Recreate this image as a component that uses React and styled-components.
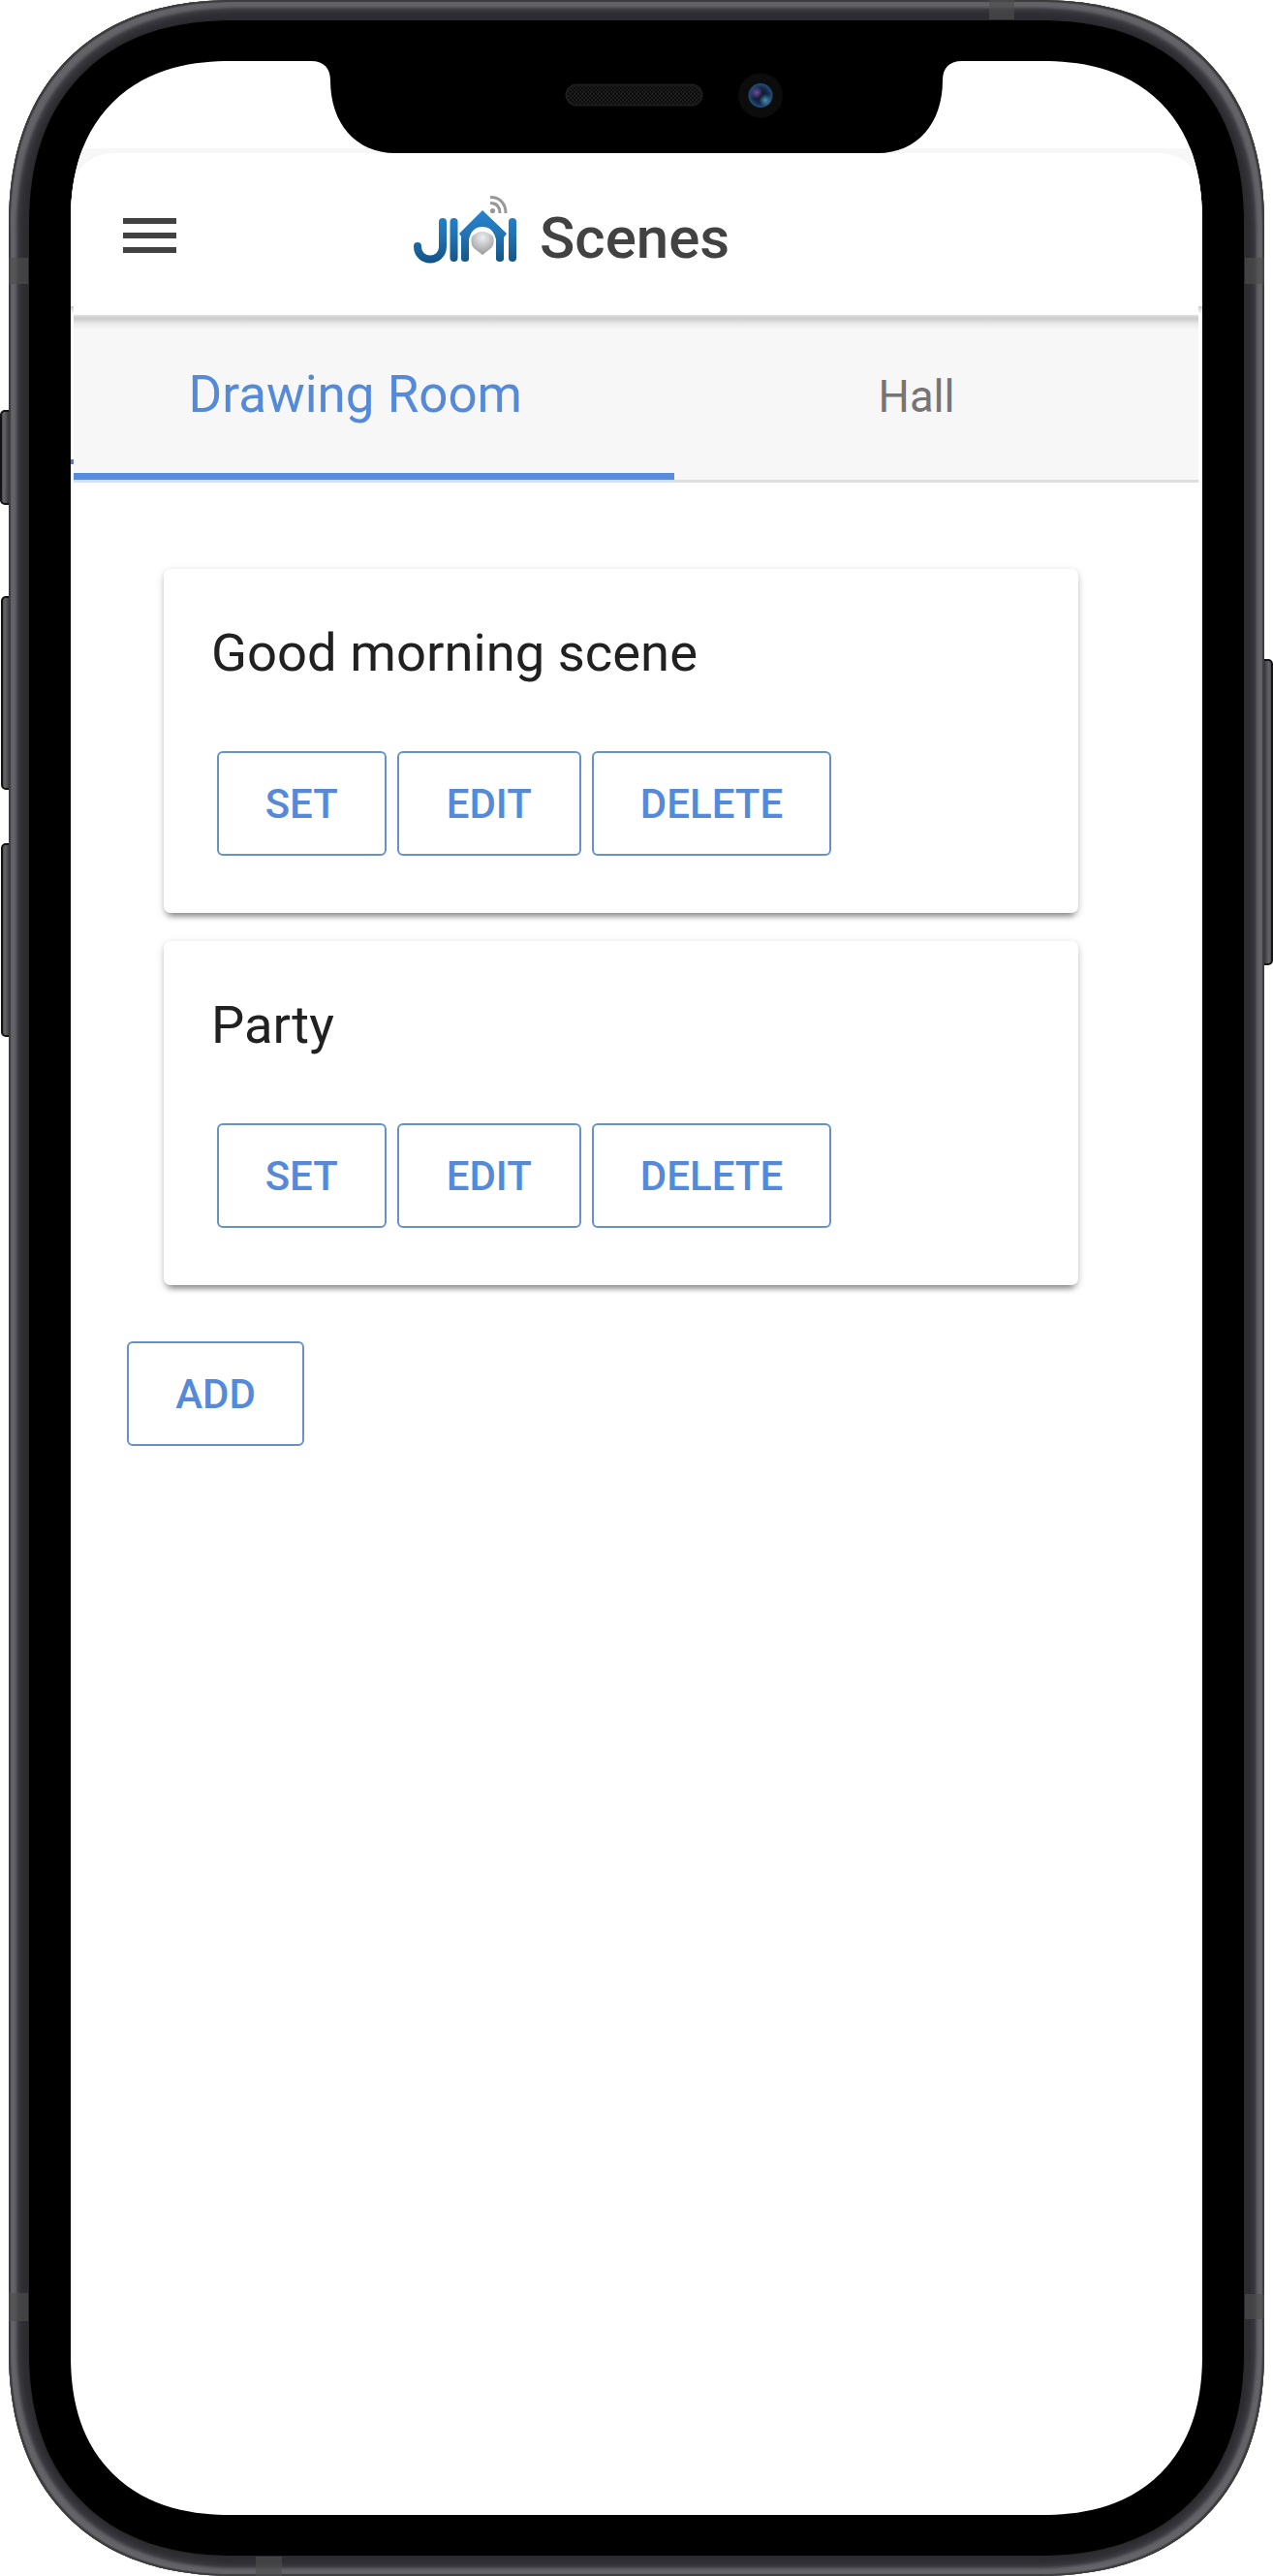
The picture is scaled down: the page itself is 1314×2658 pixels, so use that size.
import React from "react";
import styled, { createGlobalStyle } from "styled-components";

const GlobalStyle = createGlobalStyle`
  * { box-sizing: border-box; }
  html, body { margin: 0; background: #fff; }
  body { font-family: Roboto, "Liberation Sans", sans-serif; }
  button { font: inherit; cursor: pointer; }
`;

const Phone = styled.div`
  position: relative;
  width: 1314px;
  height: 2658px;
  padding: 0 9px;
  overflow: hidden;
  background: #fff;
`;

const SideKey = styled.span`
  position: absolute;
  top: ${(p) => p.$top}px;
  height: ${(p) => p.$height}px;
  width: 18px;
  ${(p) => (p.$right ? "left: 1296px;" : `left: ${p.$left}px;`)}
  border: 2px solid #141416;
  border-radius: 5px;
  background: linear-gradient(${(p) => (p.$right ? "270deg" : "90deg")}, #4a4a4e 0, #66666b 2px, #38383c 7px);
`;

const Frame = styled.div`
  position: relative;
  height: 2658px;
  width: 1296px;
  padding: 21px;
  border-radius: 208px;
  background: #2c2c31;
  box-shadow: inset 0 0 1px 2px #3c3c3f, inset 0 0 3px 8px #636368, inset 0 0 6px 11px #414147;

  @supports (corner-shape: superellipse(1.2)) {
    border-radius: 234px;
    corner-shape: superellipse(1.2);
  }
`;

const Band = styled.span`
  position: absolute;
  left: ${(p) => p.$x}px;
  top: ${(p) => p.$y}px;
  width: ${(p) => p.$w}px;
  height: ${(p) => p.$h}px;
  background: rgba(78, 78, 80, 0.65);
`;

const Bezel = styled.div`
  position: relative;
  height: 2616px;
  padding: 42px 43px;
  border-radius: 188px;
  background: #000;
  box-shadow: 0 0 0 1px #29292b;

  @supports (corner-shape: superellipse(1.2)) {
    border-radius: 212px;
    corner-shape: superellipse(1.2);
  }
`;

const Screen = styled.div`
  position: relative;
  display: flex;
  flex-direction: column;
  height: 2532px;
  overflow: hidden;
  border-radius: 146px;
  background: #fff;

  @supports (corner-shape: superellipse(1.2)) {
    border-radius: 165px;
    corner-shape: superellipse(1.2);
  }
`;

const Notch = styled.svg`
  position: absolute;
  left: 240px;
  top: 0;
  z-index: 3;
`;

const EdgeMark = styled.span`
  position: absolute;
  left: ${(p) => (p.$right ? 1164 : 0)}px;
  top: ${(p) => p.$top}px;
  width: ${(p) => (p.$right ? 4 : 3)}px;
  height: ${(p) => p.$height}px;
  background: ${(p) => p.$fill};
`;

const StatusBar = styled.div`
  flex: none;
  height: 90px;
`;

const HeaderBacking = styled.div`
  flex: none;
  padding-top: 5px;
  background: linear-gradient(#f7f7f7 60px, #fff 60px);
`;

const Header = styled.header`
  display: flex;
  align-items: center;
  height: 167px;
  padding: 3px 0 0 54px;
  border-radius: 44px 44px 0 0;
  background: #fff;
`;

const MenuButton = styled.button`
  display: flex;
  flex-direction: column;
  gap: 9px;
  width: 55px;
  padding: 0;
  border: 0;
  background: none;
`;

const MenuLine = styled.span`
  display: block;
  height: 6px;
  background: #424242;
`;

const Brand = styled.div`
  display: flex;
  align-items: flex-start;
  height: 76px;
  margin-left: 242px;
`;

const Title = styled.h1`
  margin: 6px 0 0 21px;
  font-size: 60px;
  line-height: 70px;
  font-weight: 500;
  color: #424242;
`;

const Tabs = styled.nav`
  position: relative;
  display: flex;
  flex: none;
  height: 173px;
  margin: 0 4px 0 3px;
  border-bottom: 3px solid #dedede;
  background: linear-gradient(#e2e2e2 0, #cdcdcd 3px, #d2d2d2 5px, #e9e9e9 9px, #f7f7f7 15px);
`;

const Tab = styled.button`
  position: relative;
  width: ${(p) => p.$w}px;
  padding: ${(p) => (p.$active ? "0 38px 8px 0" : "0 40px 2px 0")};
  border: 0;
  background: none;
  font-size: ${(p) => (p.$active ? 54 : 46)}px;
  color: ${(p) => (p.$active ? "#548ad8" : "#757575")};
  white-space: nowrap;

  &::after {
    content: "";
    display: ${(p) => (p.$active ? "block" : "none")};
    position: absolute;
    left: 0;
    right: 0;
    bottom: -3px;
    height: 10px;
    background: linear-gradient(#588bdb 7px, #d3e1f1 7px);
  }
`;

const TabText = styled.span`
  display: inline-block;
  transform: scaleX(${(p) => p.$stretch});
`;

const Content = styled.main`
  display: flex;
  flex-direction: column;
  gap: 29px;
  padding: 89px 128px 0 96px;
`;

const Card = styled.article`
  display: flex;
  flex-direction: column;
  height: 355px;
  padding: 55px 50px 0 49px;
  border-radius: 7px;
  background: #fff;
  box-shadow: 0 8px 6px -5px rgba(0, 0, 0, 0.33), 0 3px 6px rgba(0, 0, 0, 0.18), 0 2px 12px rgba(0, 0, 0, 0.08);
`;

const CardTitle = styled.h2`
  margin: 0;
  font-size: 54.4px;
  line-height: 64px;
  font-weight: 400;
  color: #212121;
`;

const Actions = styled.div`
  display: flex;
  gap: 11.5px;
  margin: 69px 0 0 6px;
`;

const OutlineButton = styled.button`
  flex: none;
  width: ${(p) => p.$w}px;
  height: 108px;
  padding: 0;
  border: 2px solid #6593c8;
  border-radius: 6px;
  background: #fff;
  font-size: 42px;
  font-weight: 500;
  color: #548ad8;
`;

const Footer = styled.div`
  display: flex;
  padding: 58px 0 0 58px;
`;

const LogoArt = styled.svg`
  flex: none;
  margin-top: -5px;
`;

function Logo() {
  return (
    <LogoArt width="112" height="76" viewBox="0 0 112 76" fill="none">
      <defs>
        <linearGradient id="blue" gradientUnits="userSpaceOnUse" x1="0" y1="18" x2="0" y2="72">
          <stop offset="0" stopColor="#2383cf" />
          <stop offset="0.45" stopColor="#2273b3" />
          <stop offset="1" stopColor="#125385" />
        </linearGradient>
        <radialGradient id="orb" cx="0.5" cy="0.25" r="0.75">
          <stop offset="0" stopColor="#efeff1" />
          <stop offset="1" stopColor="#98989c" />
        </radialGradient>
      </defs>
      <g stroke="url(#blue)" strokeWidth="8" strokeLinecap="round" strokeLinejoin="round">
        <path d="M7 54C7 72 33 72 33 54V29" />
        <path d="M44.500 29V66.010" />
        <path d="M105 29V66.010" />
      </g>
      <path d="M50 41L74 17L99 41L96 45V67Q96 70 92 70Q88 70 88 67V47Q85 34 74 34Q63 34 60 47V67Q60 70 56 70Q52 70 52 67V44Z" fill="url(#blue)" />
      <path d="M63 44Q74 34 85 44Q87 52 83 56L74 63L65 56Q61 52 63 44Z" fill="url(#orb)" />
      <g stroke="#99979a" strokeWidth="3">
        <path d="M82 3.500C92 3.500 98 10 98 20" />
        <path d="M82 9.500C89 9.500 92 13 92 20" />
      </g>
      <circle cx="84.500" cy="17.500" r="2.600" fill="#99979a" />
    </LogoArt>
  );
}

function NotchArt() {
  return (
    <Notch width="690" height="96" viewBox="313 63 690 96">
      <defs>
        <pattern id="mesh" width="4" height="4" patternUnits="userSpaceOnUse">
          <rect width="4" height="4" fill="#0d0d0d" />
          <path d="M0 0h2v2H0zM2 2h2v2H2z" fill="#1d1d1d" />
        </pattern>
        <radialGradient id="lens">
          <stop offset="0" stopColor="#0b1627" />
          <stop offset="0.6" stopColor="#142643" />
          <stop offset="1" stopColor="#24507c" />
        </radialGradient>
        <radialGradient id="violet">
          <stop offset="0" stopColor="#724c9d" />
          <stop offset="1" stopColor="#724c9d" stopOpacity="0" />
        </radialGradient>
        <radialGradient id="cyan">
          <stop offset="0" stopColor="#4791b5" />
          <stop offset="1" stopColor="#4791b5" stopOpacity="0" />
        </radialGradient>
      </defs>
      <path d="M313 62H1003V63H993C979 63 973 71 973 83C973 127 947 158 906 158H408C367 158 341 127 341 83C341 71 335 63 321 63H313Z" fill="#000" />
      <rect x="584.500" y="87.500" width="140" height="21" rx="10.500" fill="url(#mesh)" stroke="#1c1c1c" strokeWidth="2" />
      <circle cx="785" cy="98.500" r="23" fill="#0c0c0c" />
      <circle cx="785" cy="98.500" r="12.500" fill="url(#lens)" />
      <circle cx="781" cy="95.500" r="6.500" fill="url(#violet)" />
      <circle cx="790" cy="103.500" r="6.500" fill="url(#cyan)" />
    </Notch>
  );
}

function SceneCard({ name }) {
  return (
    <Card>
      <CardTitle>{name}</CardTitle>
      <Actions>
        <OutlineButton $w={174.5}>SET</OutlineButton>
        <OutlineButton $w={189.5}>EDIT</OutlineButton>
        <OutlineButton $w={247}>DELETE</OutlineButton>
      </Actions>
    </Card>
  );
}

const bands = [
  { $x: 0, $y: 266, $w: 20, $h: 27 },
  { $x: 1276, $y: 266, $w: 20, $h: 27 },
  { $x: 0, $y: 2366, $w: 20, $h: 29 },
  { $x: 1276, $y: 2367, $w: 20, $h: 26 },
  { $x: 1012, $y: 0, $w: 26, $h: 20 },
  { $x: 255, $y: 2638, $w: 27, $h: 20 },
];

export default function App() {
  return (
    <>
      <GlobalStyle />
      <Phone>
        <SideKey $top={423} $height={98} $left={0} />
        <SideKey $top={615} $height={200} $left={1} />
        <SideKey $top={870} $height={200} $left={1} />
        <SideKey $top={680} $height={316} $right />
        <Frame>
          {bands.map((b, i) => (
            <Band key={i} {...b} />
          ))}
          <Bezel>
            <Screen>
              <NotchArt />
              <StatusBar />
              <HeaderBacking>
                <Header>
                  <MenuButton aria-label="Menu">
                    <MenuLine />
                    <MenuLine />
                    <MenuLine />
                  </MenuButton>
                  <Brand>
                    <Logo />
                    <Title>Scenes</Title>
                  </Brand>
                </Header>
              </HeaderBacking>
              <Tabs>
                <Tab $active $w={620}>
                  <TabText $stretch={0.98}>Drawing Room</TabText>
                </Tab>
                <Tab $w={541}>
                  <TabText $stretch={0.985}>Hall</TabText>
                </Tab>
              </Tabs>
              <Content>
                <SceneCard name="Good morning scene" />
                <SceneCard name="Party" />
              </Content>
              <Footer>
                <OutlineButton $w={183}>ADD</OutlineButton>
              </Footer>
              <EdgeMark $top={253} $height={8} $fill="linear-gradient(#c8c8c8, #fff)" />
              <EdgeMark $right $top={253} $height={8} $fill="linear-gradient(#c8c8c8, #fff)" />
              <EdgeMark $top={411} $height={5} $fill="#5577d8" />
            </Screen>
          </Bezel>
        </Frame>
      </Phone>
    </>
  );
}
